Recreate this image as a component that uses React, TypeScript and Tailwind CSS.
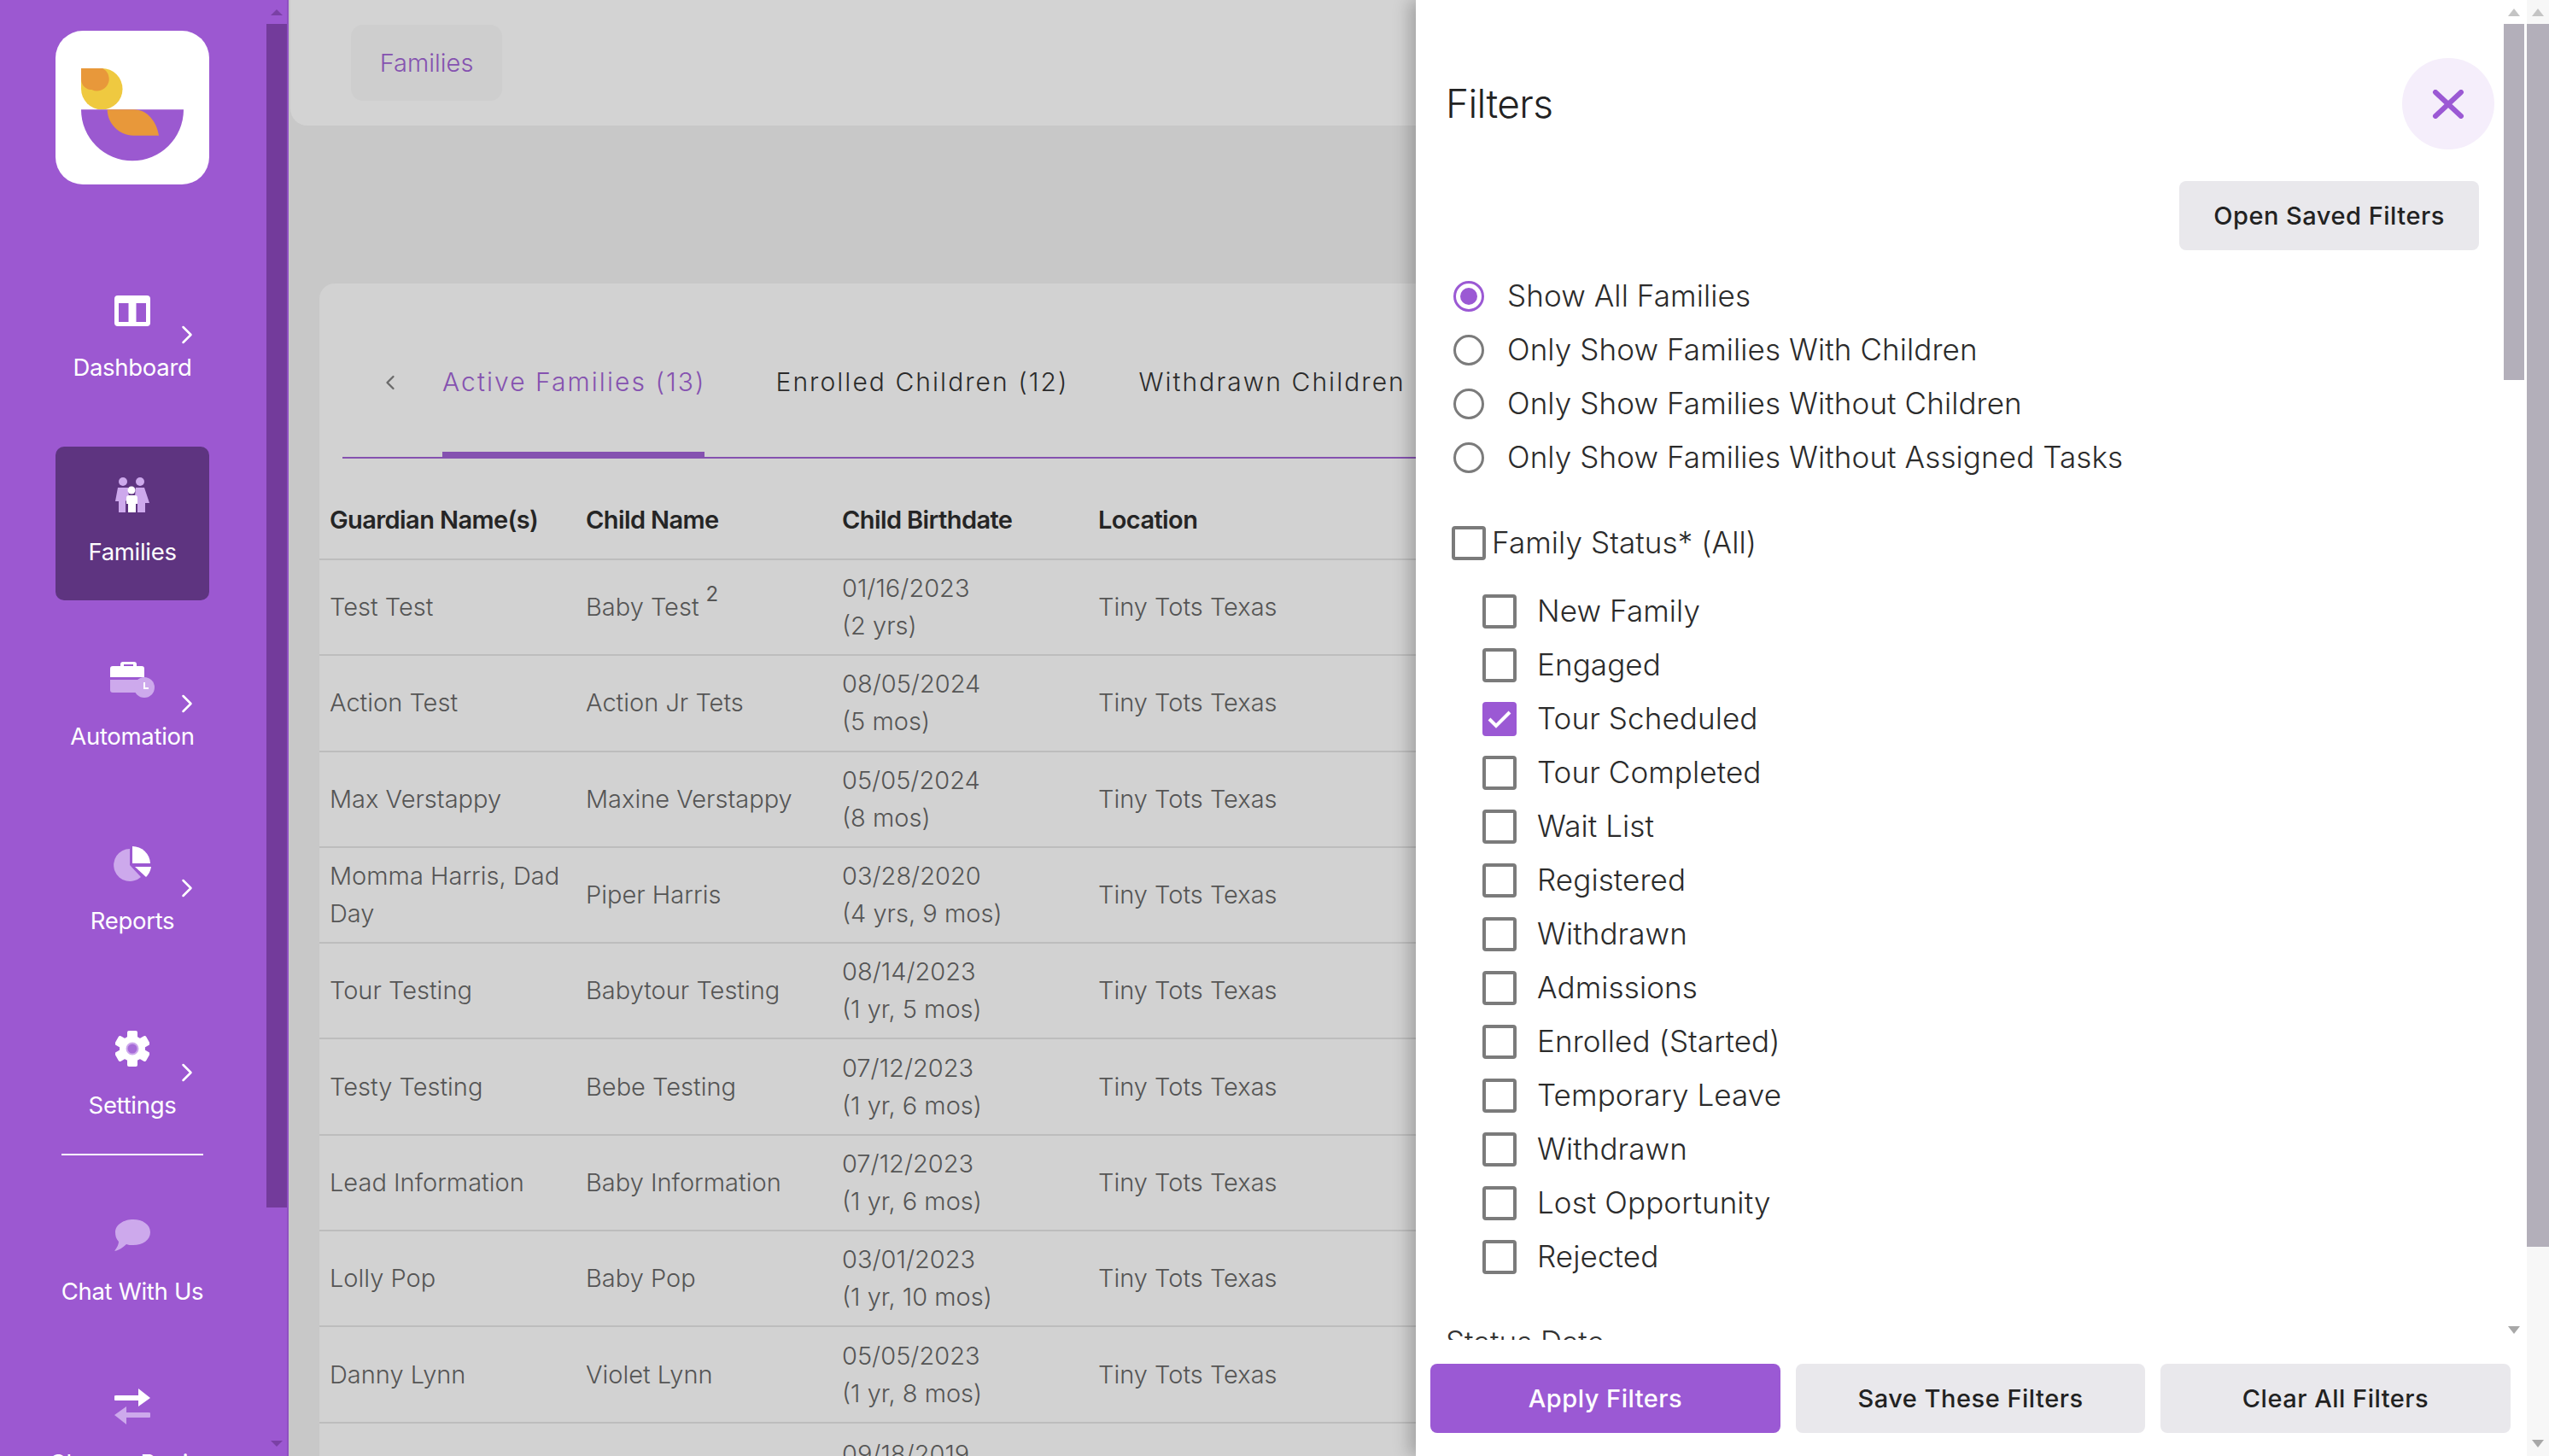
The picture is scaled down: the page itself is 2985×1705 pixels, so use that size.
import { ChevronLeft, ChevronRight } from 'lucide-react'

const LIGHT = '#cda9ec'

const rows = [
  { guardian: 'Test Test', child: 'Baby Test', sup: '2', date: '01/16/2023', age: '(2 yrs)' },
  { guardian: 'Action Test', child: 'Action Jr Tets', date: '08/05/2024', age: '(5 mos)' },
  { guardian: 'Max Verstappy', child: 'Maxine Verstappy', date: '05/05/2024', age: '(8 mos)' },
  { guardian: 'Momma Harris, Dad Day', child: 'Piper Harris', date: '03/28/2020', age: '(4 yrs, 9 mos)' },
  { guardian: 'Tour Testing', child: 'Babytour Testing', date: '08/14/2023', age: '(1 yr, 5 mos)' },
  { guardian: 'Testy Testing', child: 'Bebe Testing', date: '07/12/2023', age: '(1 yr, 6 mos)' },
  { guardian: 'Lead Information', child: 'Baby Information', date: '07/12/2023', age: '(1 yr, 6 mos)' },
  { guardian: 'Lolly Pop', child: 'Baby Pop', date: '03/01/2023', age: '(1 yr, 10 mos)' },
  { guardian: 'Danny Lynn', child: 'Violet Lynn', date: '05/05/2023', age: '(1 yr, 8 mos)' },
]

const statuses = [
  'New Family',
  'Engaged',
  'Tour Scheduled',
  'Tour Completed',
  'Wait List',
  'Registered',
  'Withdrawn',
  'Admissions',
  'Enrolled (Started)',
  'Temporary Leave',
  'Withdrawn',
  'Lost Opportunity',
  'Rejected',
]

const radios = [
  'Show All Families',
  'Only Show Families With Children',
  'Only Show Families Without Children',
  'Only Show Families Without Assigned Tasks',
]

function Logo() {
  return (
    <div className="flex h-[180px] w-[180px] shrink-0 items-center justify-center rounded-[32px] bg-white">
      <svg width="180" height="180" viewBox="15 18 540 540">
        <path d="M105 150H178A72.5 72.5 0 0 1 178 295A73 73 0 0 1 105 222Z" fill="#efc940" />
        <path d="M105 150H180A37.5 37.5 0 0 1 142 225A37 37 0 0 1 105 188Z" fill="#e8983a" />
        <path d="M105 295H465A180 180 0 0 1 105 295Z" fill="#9b59d0" />
        <path d="M197 295H290C340 295 370 340 378 386H288C240 386 197 345 197 295Z" fill="#e8983a" />
      </svg>
    </div>
  )
}

function DashboardIcon() {
  return (
    <svg width="42" height="36" viewBox="0 0 42 36">
      <rect x="16" y="8" width="10" height="24" fill={LIGHT} />
      <path d="M4 0H38A4 4 0 0 1 42 4V32A4 4 0 0 1 38 36H4A4 4 0 0 1 0 32V4A4 4 0 0 1 4 0ZM5 9V31H17V9ZM25 9V31H37V9Z" fill="#fff" fillRule="evenodd" />
    </svg>
  )
}

function FamiliesIcon() {
  return (
    <svg width="40" height="42" viewBox="0 0 40 42">
      <circle cx="9" cy="5" r="5" fill={LIGHT} />
      <circle cx="29" cy="5" r="5" fill={LIGHT} />
      <path d="M3 12H15L16 24L12 28V41H4V28H0Z" fill={LIGHT} />
      <path d="M24 12H34L40 30H35V41H26V26L23 22Z" fill={LIGHT} />
      <circle cx="19" cy="15" r="4.5" fill="#fff" />
      <path d="M13 24A3 3 0 0 1 16 21H23A3 3 0 0 1 26 24V31H24V41H15V31H13Z" fill="#fff" />
    </svg>
  )
}

function AutomationIcon() {
  return (
    <svg width="52" height="42" viewBox="0 0 52 42">
      <path d="M12 5V3A3 3 0 0 1 15 0H28A3 3 0 0 1 31 3V5H37A3 3 0 0 1 40 8V18H0V8A3 3 0 0 1 3 5ZM16 5H27V3H16Z" fill="#fff" fillRule="evenodd" />
      <path d="M0 21H40V36H3A3 3 0 0 1 0 33Z" fill={LIGHT} />
      <circle cx="40" cy="30" r="12" fill={LIGHT} />
      <path d="M40 24V31H45" fill="none" stroke="#fff" strokeWidth="2" />
    </svg>
  )
}

function ReportsIcon() {
  return (
    <svg width="44" height="42" viewBox="0 0 44 42">
      <path d="M19 3V22L32 36A19 19 0 1 1 19 3Z" fill={LIGHT} />
      <path d="M22 0A21 21 0 0 1 43 20H22Z" fill="#fff" />
      <path d="M25 24H44A21 21 0 0 1 38 36Z" fill="#fff" />
    </svg>
  )
}

function SettingsIcon() {
  return (
    <svg width="40" height="42" viewBox="-20 -21 40 42">
      {[0, 60, 120, 180, 240, 300].map((r) => (
        <rect key={r} x="-6" y="-21" width="12" height="12" rx="2" fill="#fff" transform={`rotate(${r})`} />
      ))}
      <circle r="15" fill="#fff" />
      <circle r="6.5" fill="#a76cd8" stroke={LIGHT} strokeWidth="2" />
    </svg>
  )
}

function ChatIcon() {
  return (
    <svg width="42" height="37" viewBox="0 0 42 37">
      <path d="M22 0C33 0 42 6 42 15C42 24 33 30 22 30C19 30 16 30 14 29C10 33 5 36 0 37C3 33 5 29 5 26C2 23 1 19 1 15C1 6 11 0 22 0Z" fill={LIGHT} />
    </svg>
  )
}

function ExchangeIcon() {
  return (
    <svg width="42" height="42" viewBox="0 0 42 42">
      <path d="M2 8H28V0L42 11L28 21V14H2A3 3 0 0 1 2 8Z" fill="#fff" />
      <path d="M40 28H14V21L0 31L14 42V34H40A3 3 0 0 0 40 28Z" fill={LIGHT} />
    </svg>
  )
}

function NavItem({
  icon,
  label,
  arrow,
  active,
}: {
  icon: React.ReactNode
  label: string
  arrow?: boolean
  active?: boolean
}) {
  return (
    <div
      className={`relative flex h-[180px] w-[180px] shrink-0 flex-col items-center rounded-[10px] pt-[29px] ${
        active ? 'bg-[#5e3480]' : ''
      }`}
    >
      <div className="flex h-[56px] items-center justify-center">{icon}</div>
      <div className="mt-[18px] whitespace-nowrap text-[27.5px] leading-[40px] font-normal tracking-[-0.3px] text-white">
        {label}
      </div>
      {arrow && <ChevronRight className="absolute top-[67px] left-[136px] text-white" size={36} strokeWidth={1.7} />}
    </div>
  )
}

function Sidebar() {
  return (
    <aside className="relative flex h-full w-[338px] shrink-0 overflow-hidden bg-[#9c58d1]">
      <div className="flex w-[312px] shrink-0 flex-col pt-[36px] pl-[65px]">
        <Logo />
        <div className="mt-[91px] flex flex-col gap-[36px]">
          <NavItem icon={<DashboardIcon />} label="Dashboard" arrow />
          <NavItem icon={<FamiliesIcon />} label="Families" active />
          <NavItem icon={<AutomationIcon />} label="Automation" arrow />
          <NavItem icon={<ReportsIcon />} label="Reports" arrow />
          <NavItem icon={<SettingsIcon />} label="Settings" arrow />
        </div>
        <div className="ml-[7px] h-[2px] w-[166px] shrink-0 bg-white" />
        <div className="mt-[36px] flex flex-col gap-[21px]">
          <NavItem icon={<ChatIcon />} label="Chat With Us" />
          <NavItem icon={<ExchangeIcon />} label="Change Region" />
        </div>
      </div>
      <div className="flex w-[24px] shrink-0 flex-col items-center">
        <div className="flex h-[28px] items-center justify-center">
          <div className="h-0 w-0 border-x-[7px] border-b-[7px] border-x-transparent border-b-[#7a40a5]" />
        </div>
        <div className="h-[1386px] w-full bg-[#733b9b]" />
        <div className="absolute right-[7px] bottom-[11px] h-0 w-0 border-x-[7px] border-t-[7px] border-x-transparent border-t-[#7a40a5]" />
      </div>
      <div className="h-full w-[2px] shrink-0 bg-[#8f50c2]" />
    </aside>
  )
}

function FamiliesTable() {
  return (
    <table className="w-[1900px] table-fixed border-collapse text-left">
      <thead>
        <tr className="h-[118px] border-b-2 border-[#bdbdbd]">
          {['Guardian Name(s)', 'Child Name', 'Child Birthdate', 'Location'].map((h) => (
            <th key={h} className="w-[300px] pt-[26px] pl-[12px] text-[29px] font-semibold tracking-[-0.6px] text-[#252525]">
              {h}
            </th>
          ))}
          <th />
        </tr>
      </thead>
      <tbody className="text-[29px] leading-[44px] font-light text-[#555555]">
        {rows.map((r) => (
          <tr key={r.guardian} className="h-[112.3px] border-b-2 border-[#bdbdbd]">
            <td className="pl-[12px]">{r.guardian}</td>
            <td className="pl-[12px]">
              {r.child}
              {r.sup && <sup className="-top-[0.7em] ml-[8px] text-[24px] font-normal">{r.sup}</sup>}
            </td>
            <td className="pl-[12px]">
              {r.date}
              <br />
              {r.age}
            </td>
            <td className="pl-[12px]">Tiny Tots Texas</td>
            <td />
          </tr>
        ))}
        <tr className="h-[112.3px] align-top">
          <td />
          <td />
          <td className="pt-[14px] pl-[12px]">09/18/2019</td>
          <td />
          <td />
        </tr>
      </tbody>
    </table>
  )
}

function Main() {
  return (
    <main className="h-full min-w-0 flex-1 overflow-hidden bg-[#c8c8c8] pl-[2px]">
      <div className="flex h-[147px] items-center rounded-bl-[20px] bg-[#d3d3d3] pl-[71px]">
        <div className="flex h-[89px] w-[177px] items-center justify-center rounded-[14px] bg-[#cecece] text-[29px] font-light text-[#8552b0]">
          Families
        </div>
      </div>
      <div className="mt-[185px] ml-[34px] w-[2000px] rounded-tl-[18px] bg-[#d2d2d2]">
        <div className="ml-[27px] flex h-[205px] items-center border-b-2 border-[#8552b0] pt-[28px] text-[30px] font-light tracking-[2.05px] text-[#2b2b2b]">
          <ChevronLeft className="ml-[42px] text-[#6a6a6a]" size={28} strokeWidth={2} />
          <div className="relative ml-[47px] text-[#8552b0]">
            Active Families (13)
            <div className="absolute top-[104px] right-[2px] left-0 h-[8px] bg-[#8552b0]" />
          </div>
          <div className="ml-[82px]">Enrolled Children (12)</div>
          <div className="ml-[82px] whitespace-nowrap">Withdrawn Children</div>
        </div>
        <FamiliesTable />
      </div>
    </main>
  )
}

function FilterPanel() {
  return (
    <section className="absolute top-0 right-0 flex h-full w-[1327px] bg-white shadow-[-8px_0_18px_rgba(0,0,0,0.22)]">
      <div className="flex min-w-0 flex-1 flex-col">
        <div className="relative flex h-[1569px] overflow-hidden">
          <div className="min-w-0 flex-1 pt-[68px] pr-[29px] pl-[35px] font-light text-[#2b2b2b]">
            <div className="flex h-[107px] items-center justify-between">
              <h2 className="text-[46px] font-light tracking-[-0.6px] text-[#222222]">Filters</h2>
              <button className="-mr-[18px] flex h-[107px] w-[108px] items-center justify-center rounded-full bg-[#f5eefb]">
                <svg width="38" height="34" viewBox="0 0 38 34">
                  <path d="M4 3L34 31M34 3L4 31" stroke="#9b59d4" strokeWidth="6" strokeLinecap="round" />
                </svg>
              </button>
            </div>
            <div className="mt-[37px] flex justify-end">
              <button className="h-[81px] w-[351px] rounded-[8px] bg-[#e9e8ec] text-[29px] font-medium tracking-[0.5px] text-[#222222]">
                Open Saved Filters
              </button>
            </div>
            <div className="mt-[22px] flex flex-col text-[35px] tracking-[0.1px]">
              {radios.map((r, i) => (
                <label key={r} className="flex h-[63px] items-center">
                  <span
                    className={`ml-[9px] flex h-[36px] w-[36px] items-center justify-center rounded-full border-[3px] ${
                      i === 0 ? 'border-[#9b59d4]' : 'border-[#7b7b7b]'
                    }`}
                  >
                    {i === 0 && <span className="h-[20px] w-[20px] rounded-full bg-[#9b59d4]" />}
                  </span>
                  <span className="ml-[27px]">{r}</span>
                </label>
              ))}
            </div>
            <label className="mt-[37px] flex h-[63px] items-center text-[35px] tracking-[0.1px]">
              <span className="ml-[7px] h-[40px] w-[40px] rounded-[4px] border-[4px] border-[#7b7b7b]" />
              <span className="ml-[7px]">Family Status* (All)</span>
            </label>
            <div className="mt-[17px] flex flex-col text-[35px] tracking-[0.1px]">
              {statuses.map((s, i) => (
                <label key={i} className="flex h-[63px] items-center">
                  {s === 'Tour Scheduled' ? (
                    <span className="ml-[43px] flex h-[40px] w-[40px] items-center justify-center rounded-[4px] bg-[#9b59d4]">
                      <svg width="30" height="24" viewBox="0 0 30 24">
                        <path d="M3 12L11 20L27 4" fill="none" stroke="#fff" strokeWidth="4" />
                      </svg>
                    </span>
                  ) : (
                    <span className="ml-[43px] h-[40px] w-[40px] rounded-[4px] border-[4px] border-[#7b7b7b]" />
                  )}
                  <span className="ml-[24px]">{s}</span>
                </label>
              ))}
            </div>
            <div className="mt-[42px] text-[35px] font-light text-[#333333]">Status Date</div>
          </div>
          <div className="flex w-[24px] shrink-0 flex-col items-center">
            <div className="flex h-[28px] items-center justify-center">
              <div className="h-0 w-0 border-x-[7px] border-b-[9px] border-x-transparent border-b-[#c4c4c4]" />
            </div>
            <div className="h-[417px] w-full bg-[#b3afba]" />
            <div className="absolute right-[5px] bottom-[7px] h-0 w-0 border-x-[7px] border-t-[9px] border-x-transparent border-t-[#a8a8a8]" />
          </div>
        </div>
        <div className="flex gap-[18px] pt-[28px] pl-[17px]">
          <button className="h-[81px] w-[410px] rounded-[8px] bg-[#9b59d4] text-[29px] font-medium tracking-[0.5px] text-white">
            Apply Filters
          </button>
          <button className="h-[81px] w-[409px] rounded-[8px] bg-[#e9e8ec] text-[29px] font-medium tracking-[0.5px] text-[#222222]">
            Save These Filters
          </button>
          <button className="h-[81px] w-[410px] rounded-[8px] bg-[#e9e8ec] text-[29px] font-medium tracking-[0.5px] text-[#222222]">
            Clear All Filters
          </button>
        </div>
      </div>
      <div className="relative ml-[3px] flex w-[26px] shrink-0 flex-col items-center bg-[#f7f7f7]">
        <div className="flex h-[28px] items-center justify-center">
          <div className="h-0 w-0 border-x-[7px] border-b-[9px] border-x-transparent border-b-[#c4c4c4]" />
        </div>
        <div className="h-[1432px] w-full bg-[#b3afba]" />
        <div className="absolute bottom-[10px] h-0 w-0 border-x-[7px] border-t-[9px] border-x-transparent border-t-[#a8a8a8]" />
      </div>
    </section>
  )
}

export default function App() {
  return (
    <div className="relative flex h-[1705px] w-[2985px] overflow-hidden bg-white font-[Inter,sans-serif]">
      <Sidebar />
      <Main />
      <FilterPanel />
    </div>
  )
}
